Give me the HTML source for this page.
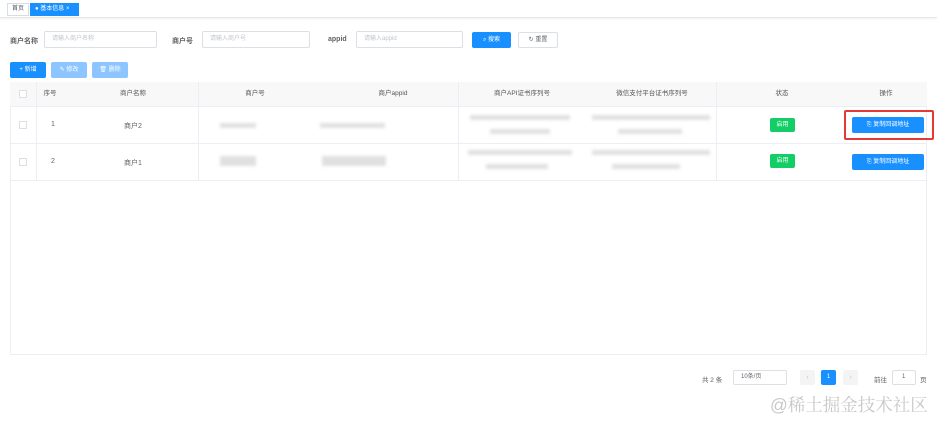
<!DOCTYPE html>
<html><head><meta charset="utf-8"><style>
*{box-sizing:border-box;margin:0;padding:0}
body{width:937px;height:421px;background:#fff;font-family:"Liberation Sans","Noto Sans CJK SC",sans-serif;font-size:7px;color:#606266;position:relative;overflow:hidden}
.a{position:absolute}
.top{left:0;top:0;width:937px;height:18px;border-bottom:1px solid #e6e6e6;box-shadow:0 1px 2px rgba(0,0,0,.06)}
.tag{top:3px;height:13px;border:1px solid #d8dce5;font-size:6px;line-height:11px;padding:0 4px;color:#495060}
.inp{height:17px;border:1px solid #dcdfe6;border-radius:2px;font-size:6px;color:#c0c4cc;line-height:15px;padding-left:7px}
.lbl{font-size:7px;color:#606266;font-weight:bold}
.btn{height:16px;border-radius:2px;font-size:6px;line-height:16px;text-align:center;color:#fff;background:#1890ff}
.blur{background:#e0e0e0;filter:blur(1.5px);height:5px}
.th{top:82px;height:24px;line-height:24px;font-size:6.5px;color:#555;text-align:center}
.vl{width:1px;background:#ebeef5}
.hl{height:1px;background:#ebeef5;left:10px;width:917px}
.cell{font-size:7px;color:#606266;text-align:center}
</style></head><body>
<div class="a top"></div>
<div class="a tag" style="left:7px">首页</div>
<div class="a tag" style="left:30px;background:#1890ff;border-color:#1890ff;color:#fff;width:49px">● 基本信息 ×</div>

<div class="a lbl" style="left:10px;top:36px">商户名称</div>
<div class="a inp" style="left:44px;top:31px;width:113px">请输入商户名称</div>
<div class="a lbl" style="left:172px;top:36px">商户号</div>
<div class="a inp" style="left:202px;top:31px;width:108px">请输入商户号</div>
<div class="a lbl" style="left:328px;top:36px">appid</div>
<div class="a inp" style="left:356px;top:31px;width:107px">请输入appid</div>
<div class="a btn" style="left:472px;top:32px;width:39px">⌕ 搜索</div>
<div class="a btn" style="left:518px;top:32px;width:40px;background:#fff;border:1px solid #dcdfe6;color:#606266;line-height:14px">↻ 重置</div>

<div class="a btn" style="left:10px;top:62px;width:36px">+ 新增</div>
<div class="a btn" style="left:51px;top:62px;width:36px;background:#8cc5ff">✎ 修改</div>
<div class="a btn" style="left:92px;top:62px;width:36px;background:#8cc5ff">🗑 删除</div>

<div class="a" style="left:10px;top:82px;width:917px;height:273px;border:1px solid #ebeef5"></div>
<div class="a" style="left:10px;top:82px;width:917px;height:24px;background:#f8f8f9"></div>
<div class="a hl" style="top:106px"></div>
<div class="a hl" style="top:143px"></div>
<div class="a hl" style="top:180px"></div>
<div class="a vl" style="left:36px;top:82px;height:98px"></div>
<div class="a vl" style="left:198px;top:82px;height:98px"></div>
<div class="a vl" style="left:458px;top:82px;height:98px"></div>
<div class="a vl" style="left:716px;top:82px;height:98px"></div>

<div class="a" style="left:19px;top:90px;width:8px;height:8px;border:1px solid #dcdfe6;background:#fff"></div>
<div class="a" style="left:19px;top:121px;width:8px;height:8px;border:1px solid #dcdfe6"></div>
<div class="a" style="left:19px;top:158px;width:8px;height:8px;border:1px solid #dcdfe6"></div>

<div class="a th" style="left:40px;width:20px">序号</div>
<div class="a th" style="left:100px;width:66px">商户名称</div>
<div class="a th" style="left:220px;width:70px">商户号</div>
<div class="a th" style="left:350px;width:86px">商户appid</div>
<div class="a th" style="left:470px;width:104px">商户API证书序列号</div>
<div class="a th" style="left:590px;width:124px">微信支付平台证书序列号</div>
<div class="a th" style="left:760px;width:44px">状态</div>
<div class="a th" style="left:860px;width:52px">操作</div>

<div class="a cell" style="left:51px;top:121px">1</div>
<div class="a cell" style="left:110px;top:121px;width:46px">商户2</div>
<div class="a cell" style="left:51px;top:158px">2</div>
<div class="a cell" style="left:110px;top:158px;width:46px">商户1</div>

<div class="a blur" style="left:220px;top:123px;width:36px"></div>
<div class="a blur" style="left:320px;top:123px;width:65px"></div>
<div class="a blur" style="left:470px;top:115px;width:100px"></div>
<div class="a blur" style="left:490px;top:129px;width:60px"></div>
<div class="a blur" style="left:592px;top:115px;width:118px"></div>
<div class="a blur" style="left:618px;top:129px;width:64px"></div>
<div class="a blur" style="left:220px;top:156px;width:36px;height:10px"></div>
<div class="a blur" style="left:322px;top:156px;width:64px;height:10px"></div>
<div class="a blur" style="left:468px;top:150px;width:104px"></div>
<div class="a blur" style="left:486px;top:164px;width:62px"></div>
<div class="a blur" style="left:592px;top:150px;width:118px"></div>
<div class="a blur" style="left:612px;top:164px;width:68px"></div>

<div class="a btn" style="left:770px;top:118px;width:25px;height:14px;line-height:14px;background:#13ce66">启用</div>
<div class="a btn" style="left:770px;top:154px;width:25px;height:14px;line-height:14px;background:#13ce66">启用</div>
<div class="a btn" style="left:852px;top:117px;width:72px">⎘ 复制回调地址</div>
<div class="a" style="left:844px;top:110px;width:90px;height:30px;border:2px solid #e53935;border-radius:2px"></div>
<div class="a btn" style="left:852px;top:154px;width:72px">⎘ 复制回调地址</div>

<div class="a" style="left:702px;top:374px;font-size:6.5px">共 2 条</div>
<div class="a inp" style="left:733px;top:370px;width:54px;height:15px;line-height:13px;color:#606266">10条/页</div>
<div class="a" style="left:800px;top:370px;width:15px;height:15px;background:#f4f4f5;border-radius:2px;text-align:center;line-height:15px;color:#c0c4cc">‹</div>
<div class="a btn" style="left:821px;top:370px;width:15px;height:15px;line-height:15px">1</div>
<div class="a" style="left:843px;top:370px;width:15px;height:15px;background:#f4f4f5;border-radius:2px;text-align:center;line-height:15px;color:#c0c4cc">›</div>
<div class="a" style="left:874px;top:374px;font-size:6.5px">前往</div>
<div class="a inp" style="left:892px;top:370px;width:24px;height:15px;line-height:13px;color:#606266;padding-left:9px">1</div>
<div class="a" style="left:920px;top:374px;font-size:6.5px">页</div>

<div class="a" style="left:770px;top:392px;font-size:17.5px;color:#c8c8c8;font-family:'Liberation Sans','Noto Serif CJK SC',serif;white-space:nowrap">@稀土掘金技术社区</div>
</body></html>
